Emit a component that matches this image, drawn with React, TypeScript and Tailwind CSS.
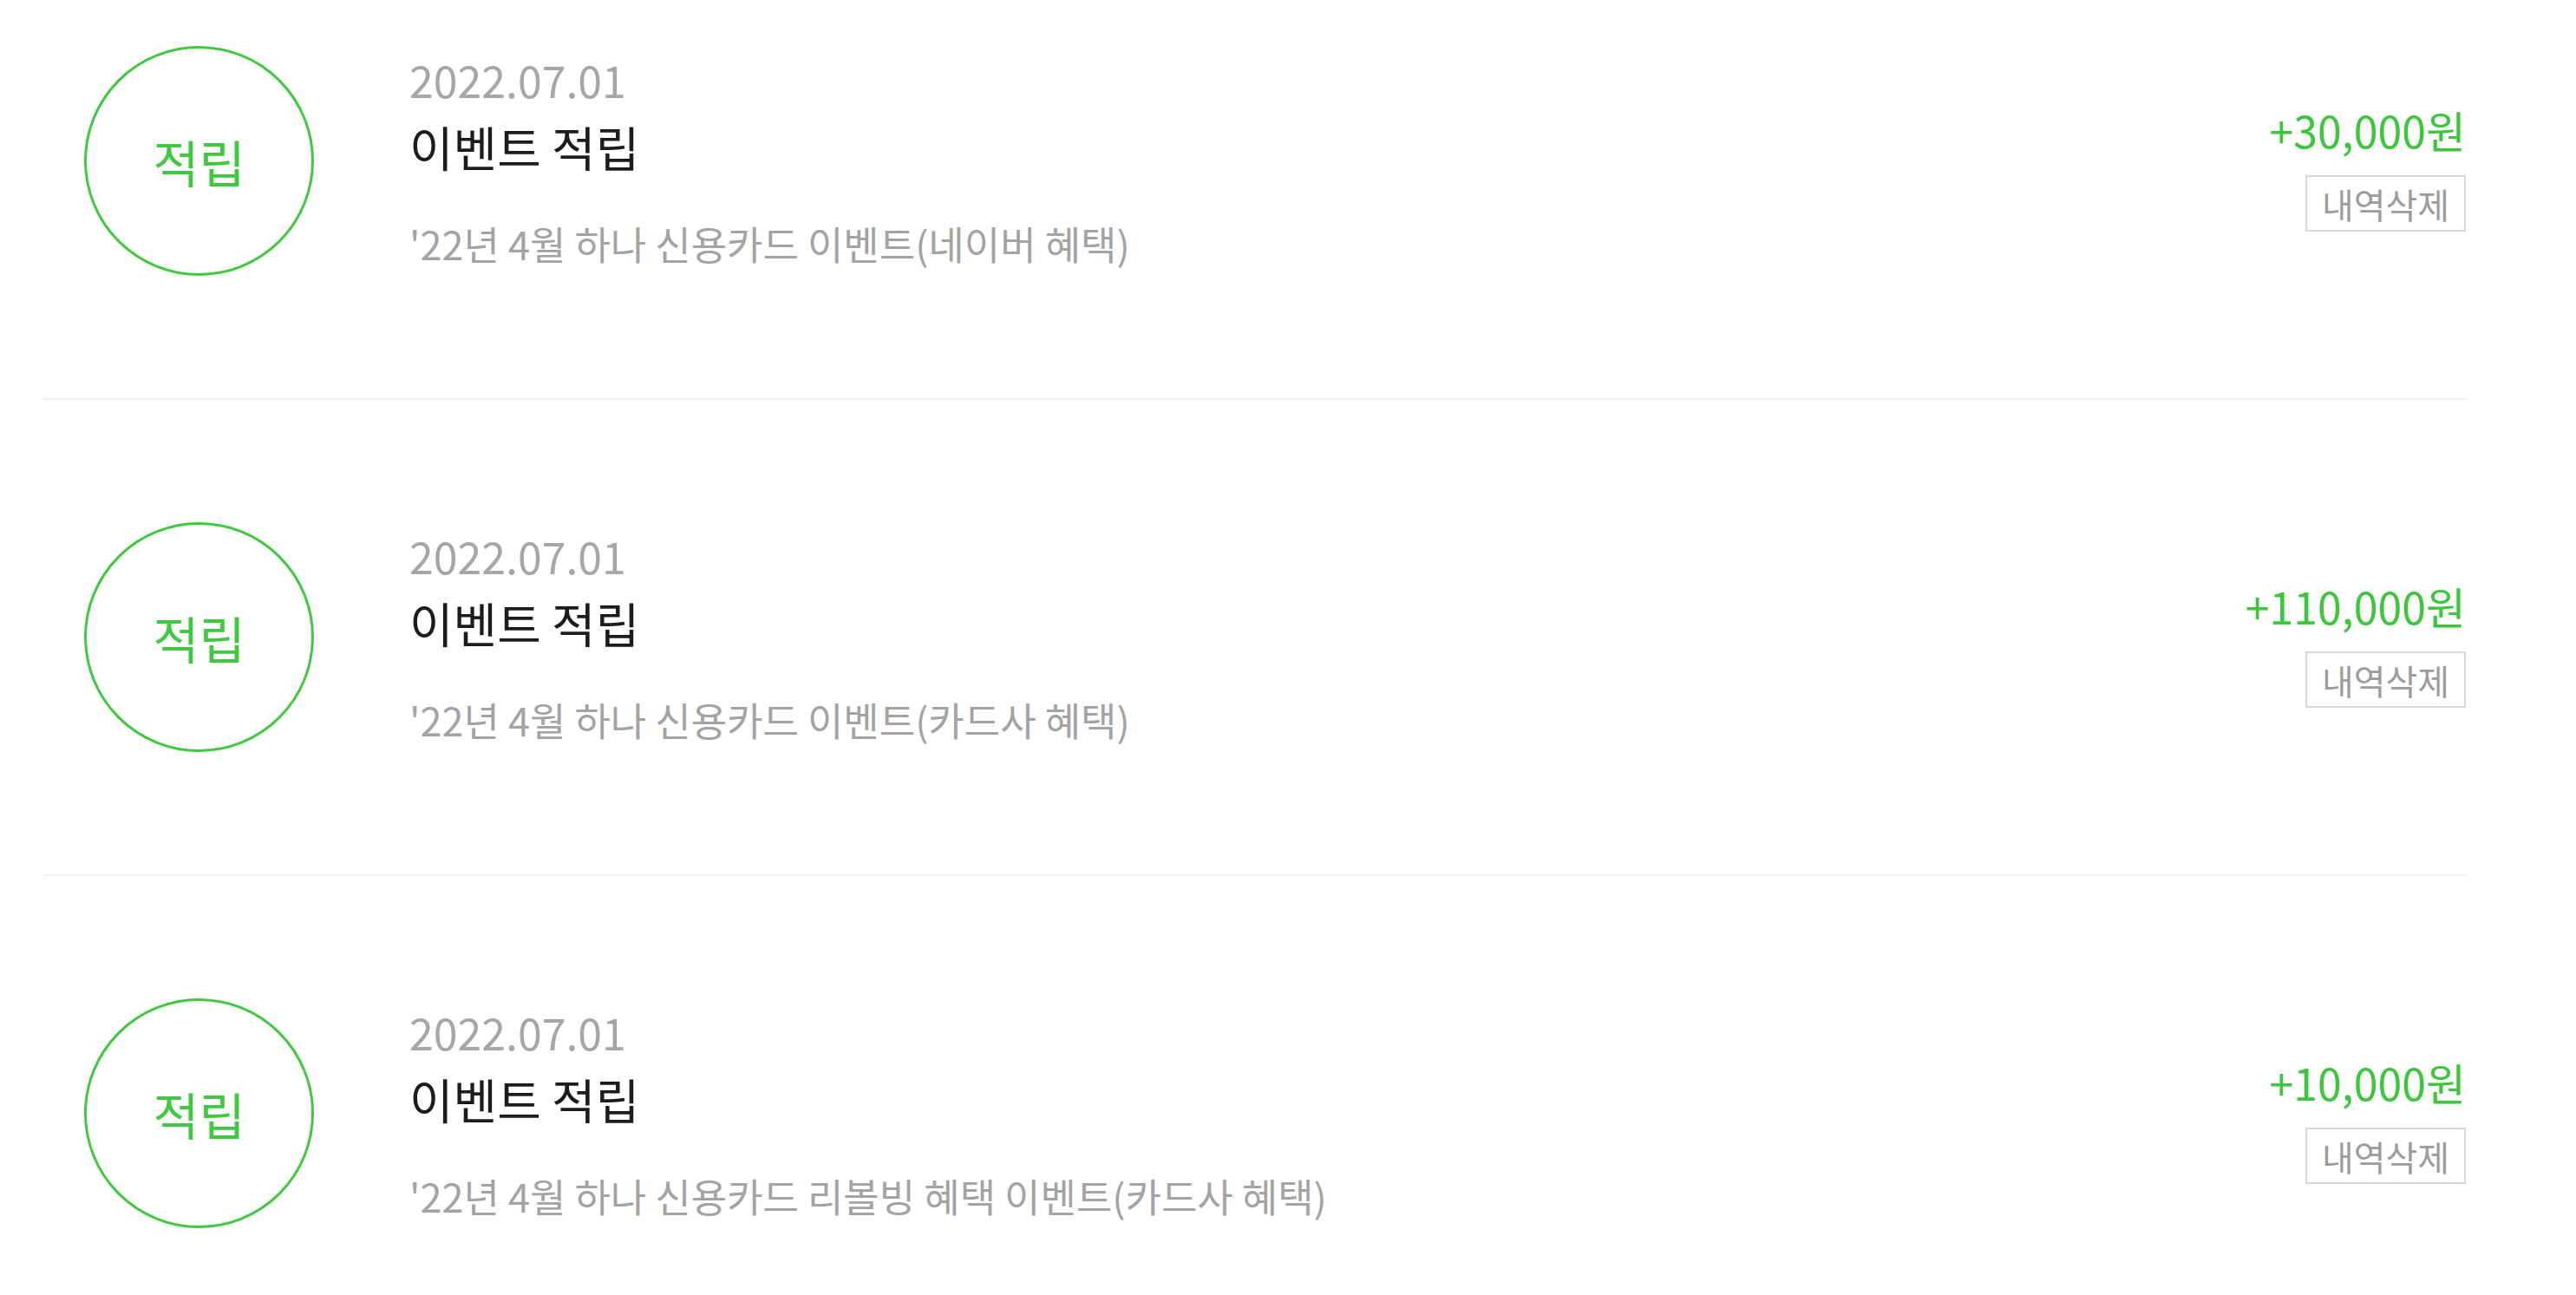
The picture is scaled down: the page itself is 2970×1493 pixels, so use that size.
import React from 'react';

interface PointItem {
	id: number;
	type: string;
	date: string;
	title: string;
	description: string;
	amount: string;
}

const pointItems: PointItem[] = [
	{
		id: 1,
		type: '적립',
		date: '2022.07.01',
		title: '이벤트 적립',
		description: "'22년 4월 하나 신용카드 이벤트(네이버 혜택)",
		amount: '+30,000원',
	},
	{
		id: 2,
		type: '적립',
		date: '2022.07.01',
		title: '이벤트 적립',
		description: "'22년 4월 하나 신용카드 이벤트(카드사 혜택)",
		amount: '+110,000원',
	},
	{
		id: 3,
		type: '적립',
		date: '2022.07.01',
		title: '이벤트 적립',
		description: "'22년 4월 하나 신용카드 리볼빙 혜택 이벤트(카드사 혜택)",
		amount: '+10,000원',
	},
];

const PointRow = ({ item }: { item: PointItem }) => {
	return (
		<li className="flex items-start border-b-2 border-[#f1f1f1] pt-[141px] pb-[141px] first:pt-[53px] last:border-b-0">
			<div className="ml-[47px] flex h-[265px] w-[265px] shrink-0 items-center justify-center rounded-full border-[3px] border-[#40c840]">
				<span className="text-[58px] leading-none text-[#40c840]">{item.type}</span>
			</div>
			<div className="ml-[110px] mt-[13px] flex flex-1 flex-col">
				<span className="text-[50px] leading-none text-[#a6a6a6]">{item.date}</span>
				<h5 className="mt-[25px] text-[55px] leading-none text-[#1c1c1c]">
					{item.title}
				</h5>
				<p className="mt-[62px] text-[45px] leading-none text-[#a3a3a3]">
					{item.description}
				</p>
			</div>
			<div className="mt-[71px] flex flex-col items-end">
				<span className="text-[50px] leading-none text-[#3cc63c]">{item.amount}</span>
				<button className="mt-[28px] flex h-[65px] w-[185px] items-center justify-center border-2 border-[#d8d8d8] bg-white text-[40px] leading-none text-[#9c9c9c]">
					내역삭제
				</button>
			</div>
		</li>
	);
};

export default function App(): JSX.Element {
	return (
		<div
			className="min-h-[1493px] w-[2970px] overflow-hidden bg-white pl-[50px] pr-[127px]"
			style={{ fontFamily: '"Noto Sans CJK KR", "Noto Sans", sans-serif' }}
		>
			<ul>
				{pointItems.map((item) => (
					<PointRow key={item.id} item={item} />
				))}
			</ul>
		</div>
	);
}
